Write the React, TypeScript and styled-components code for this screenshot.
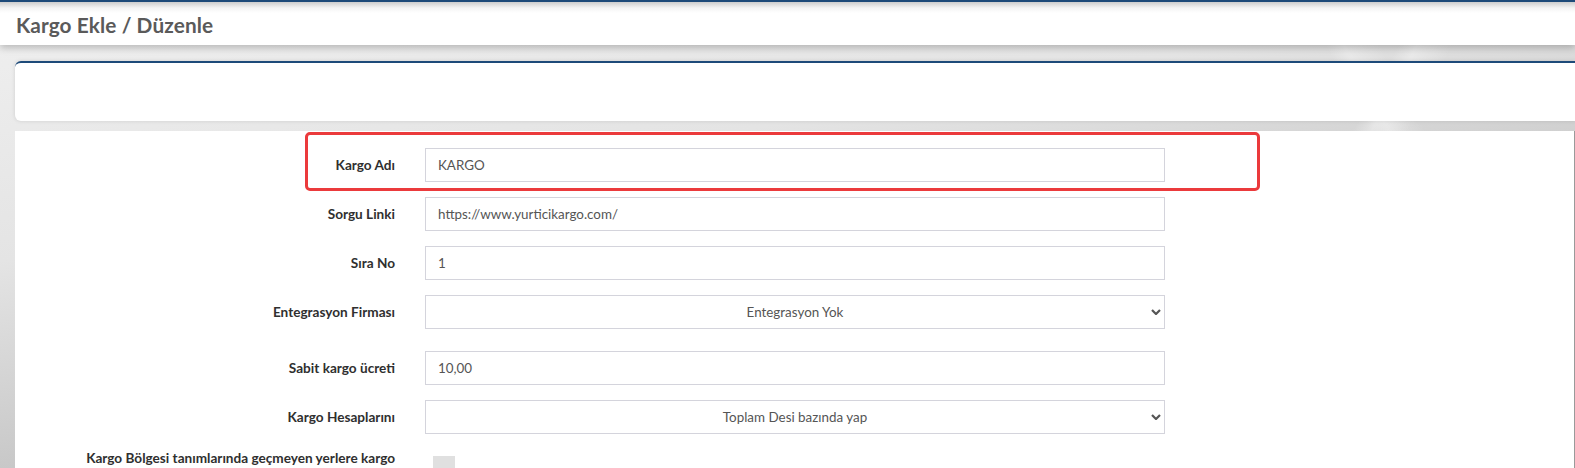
import React from "react";
import styled, { createGlobalStyle } from "styled-components";

const Global = createGlobalStyle`
  html, body { margin: 0; padding: 0; }
  body {
    width: 1575px;
    height: 468px;
    overflow: hidden;
    font-family: "Lato", "Open Sans", sans-serif;
    background: #d6d6d6;
  }
  * { box-sizing: border-box; }
`;

const Page = styled.div`
  width: 1575px;
  height: 468px;
  display: flex;
  flex-direction: column;
  overflow: hidden;
  background-color: #cfcfcf;
  background-image:
    linear-gradient(118deg, transparent 0 78%, rgba(255,255,255,0.35) 79%, transparent 81%),
    linear-gradient(62deg, transparent 0 85%, rgba(255,255,255,0.3) 86%, transparent 88%),
    linear-gradient(170deg, #f0f0f0 0%, #e4e4e4 35%, #c9c9c9 62%, #a3a3a3 100%);
`;

const Header = styled.header`
  position: relative;
  z-index: 2;
  height: 45px;
  flex: none;
  border-top: 2px solid #1d4a79;
  background: linear-gradient(to bottom, #cdcdcd 0px, #f4f4f4 6px, #ffffff 11px);
  box-shadow: 0 3px 7px rgba(0, 0, 0, 0.22);
  display: flex;
  align-items: center;
  padding-left: 16px;
`;

const Title = styled.h1`
  margin: 0;
  padding-top: 1px;
  font-family: "Lato", sans-serif;
  font-weight: 700;
  font-size: 20.8px;
  color: #5a5a5a;
  letter-spacing: 0.1px;
`;

const Body = styled.main`
  flex: 1;
  display: flex;
  flex-direction: column;
  gap: 10px;
  padding: 16px 0 0 15px;
`;

const TopCard = styled.section`
  height: 60px;
  background: #fff;
  border-top: 2px solid #1d4a79;
  border-radius: 6px 0 0 6px;
  box-shadow: 0 0 4px rgba(0, 0, 0, 0.12);
`;

const FormCard = styled.section`
  flex: 1;
  background: #fff;
  border-right: 1px solid #9a9a9a;
  padding-top: 17px;
  display: flex;
  flex-direction: column;
`;

const Row = styled.div<{ $gap?: number; $top?: boolean }>`
  position: relative;
  display: grid;
  grid-template-columns: 380px 740px;
  column-gap: 30px;
  align-items: ${(p) => (p.$top ? "start" : "center")};
  margin-bottom: ${(p) => p.$gap ?? 15}px;
`;

const Label = styled.label`
  text-align: right;
  font-family: "Lato", sans-serif;
  font-weight: 700;
  font-size: 13.6px;
  line-height: 17px;
  color: #2f2f2f;
`;

const MultiLabel = styled(Label)`
  padding-left: 60px;
  padding-top: 1px;
`;

const Input = styled.input`
  height: 34px;
  width: 100%;
  border: 1px solid #d4d4dc;
  border-radius: 0;
  padding: 0 12px;
  font-family: "Lato", sans-serif;
  font-size: 13.4px;
  color: #555;
  background: #fff;
  outline: none;
`;

const SelectWrap = styled.div`
  position: relative;
  height: 34px;
`;

const Select = styled.select`
  appearance: none;
  -webkit-appearance: none;
  height: 34px;
  width: 100%;
  border: 1px solid #d4d4dc;
  border-radius: 0;
  padding: 0 12px;
  font-family: "Lato", sans-serif;
  font-size: 13.4px;
  color: #555;
  background: #fff;
  text-align: center;
  text-align-last: center;
  outline: none;
`;

const Chevron = styled.svg`
  position: absolute;
  right: 4px;
  top: 14px;
  width: 10px;
  height: 6px;
  pointer-events: none;
`;

const Highlight = styled.div`
  position: absolute;
  left: 290px;
  top: -16px;
  width: 955px;
  height: 59px;
  border: 3px solid #eb3a3c;
  border-radius: 5px;
  pointer-events: none;
`;

const CheckBox = styled.span`
  display: block;
  margin: 7px 0 0 8px;
  width: 22px;
  height: 22px;
  background: #e0e0e0;
`;

function SelectField({ value }: { value: string }) {
  return (
    <SelectWrap>
      <Select defaultValue={value}>
        <option>{value}</option>
      </Select>
      <Chevron viewBox="0 0 10 6">
        <polyline points="1,1 5,5 9,1" fill="none" stroke="#555" strokeWidth="2.2" />
      </Chevron>
    </SelectWrap>
  );
}

export default function App() {
  return (
    <>
      <Global />
      <Page>
        <Header>
          <Title>Kargo Ekle / Düzenle</Title>
        </Header>
        <Body>
          <TopCard />
          <FormCard>
            <Row>
              <Highlight />
              <Label>Kargo Adı</Label>
              <Input defaultValue="KARGO" />
            </Row>
            <Row>
              <Label>Sorgu Linki</Label>
              <Input defaultValue="https://www.yurticikargo.com/" />
            </Row>
            <Row>
              <Label>Sıra No</Label>
              <Input defaultValue="1" />
            </Row>
            <Row $gap={22}>
              <Label>Entegrasyon Firması</Label>
              <SelectField value="Entegrasyon Yok" />
            </Row>
            <Row>
              <Label>Sabit kargo ücreti</Label>
              <Input defaultValue="10,00" />
            </Row>
            <Row>
              <Label>Kargo Hesaplarını</Label>
              <SelectField value="Toplam Desi bazında yap" />
            </Row>
            <Row $top>
              <MultiLabel>Kargo Bölgesi tanımlarında geçmeyen yerlere kargo ücreti</MultiLabel>
              <CheckBox />
            </Row>
          </FormCard>
        </Body>
      </Page>
    </>
  );
}
